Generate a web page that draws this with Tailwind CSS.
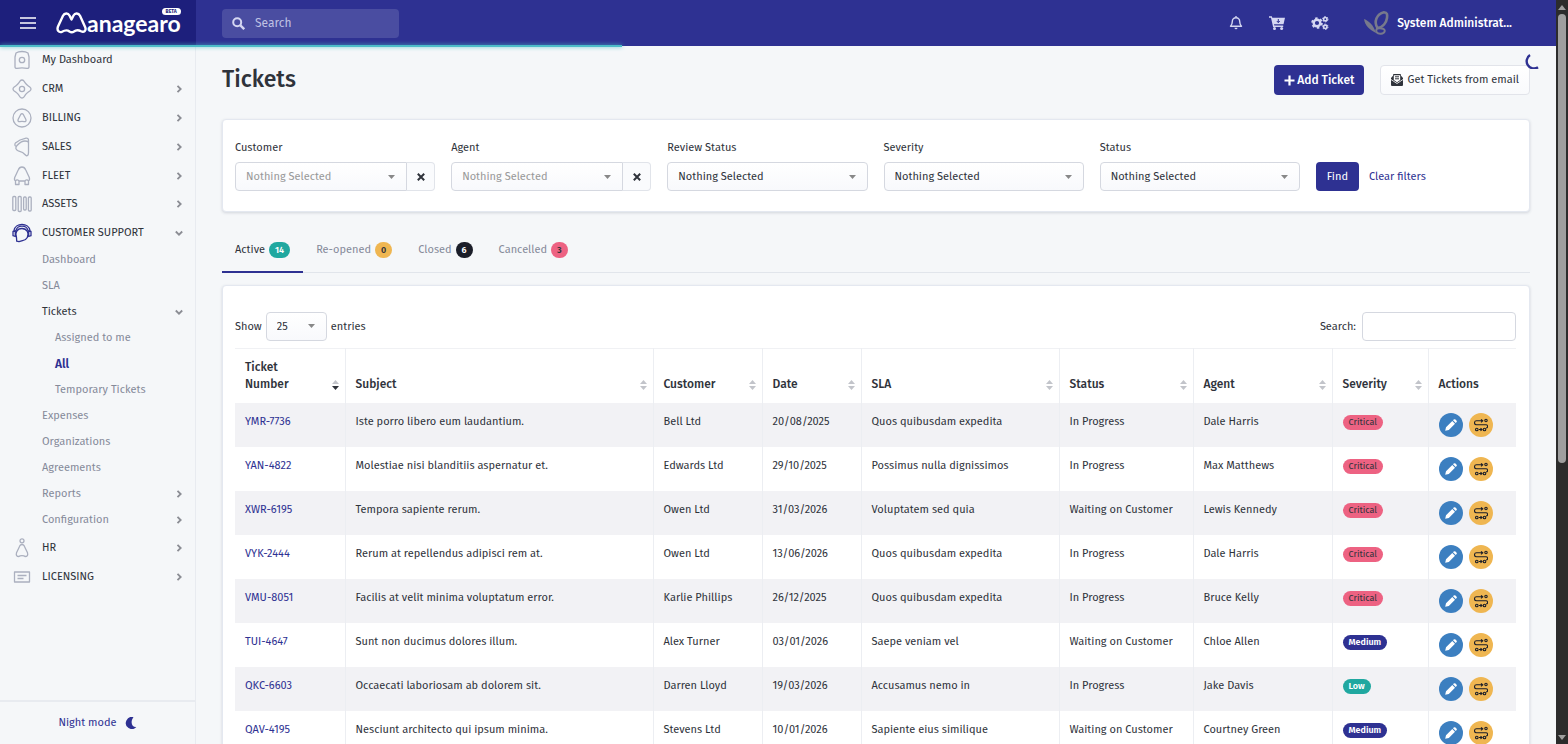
<!DOCTYPE html>
<html lang="en">
<head>
  <meta charset="utf-8" />
  <title>Tickets • Managearo</title>
  <script src="https://cdn.jsdelivr.net/npm/@tailwindcss/browser@4"></script>
</head>
<body class="h-screen flex overflow-hidden bg-[#f5f7f9] font-['Fira_Sans','Noto_Sans',sans-serif] text-[11px] leading-4 text-[#2f333b]">

  <div class="flex-1 min-w-0 flex flex-col">

    <!-- TOP BAR -->
    <header class="relative shrink-0 h-[46px] flex bg-[#2e3192] text-[#d5d7f2]">
      <div class="w-[196px] shrink-0 flex items-center pl-5 bg-[#1d1f7c] text-white">
        <button aria-label="Toggle menu">
          <svg class="w-4 h-3" viewBox="0 0 16 12" fill="none" stroke="currentColor" stroke-width="1.6"><path d="M0 1h16M0 6h16M0 11h16"/></svg>
        </button>
        <a href="#" class="relative ml-5 flex items-center">
          <svg class="w-[31px] h-[22px]" viewBox="0 0 31 22" fill="none" stroke="currentColor" stroke-width="2.400" stroke-linecap="round" stroke-linejoin="round"><path d="M15.500 7.500L13.500 3.500C12 .8 8.500.8 7 3.800L2 14.500C.5 18.500 3 21 6 19.800 9 18 11 17.500 13.500 19.500c1.500 1 3 1 4.500 0 2.500-2 4.500-1.700 7-.2 3 1.500 5.500-.8 4.200-4L24 3.800C22.500.8 19 .8 17.500 3.500z"/></svg>
          <span class="font-['Lato',sans-serif] text-[23px] leading-6 font-bold">anagearo</span>
          <span class="absolute right-0 -top-[3px] px-1 rounded-full bg-white text-[#1d1f7c] text-[5px] leading-[7px] font-bold">BETA</span>
        </a>
      </div>
      <div class="flex-1 flex items-center pl-[26px] pr-11">
        <label class="w-[177px] h-[29px] flex items-center gap-[10px] px-[10px] rounded-sm bg-[#4a4da1]">
          <svg class="w-[13px] h-[13px] shrink-0" viewBox="0 0 13 13" fill="none" stroke="currentColor" stroke-width="2"><circle cx="5.200" cy="5.200" r="4"/><path d="M8.200 8.200l4 4" stroke-width="2.400"/></svg>
          <input type="text" placeholder="Search" aria-label="Search" class="w-full min-w-0 bg-transparent outline-none text-xs placeholder:text-[#bfc1e3]" />
        </label>
        <div class="ml-auto flex items-center">
          <button aria-label="Notifications">
            <svg class="w-[14px] h-[14px]" viewBox="0 0 14 14" fill="none" stroke="currentColor" stroke-width="1.400" stroke-linejoin="round"><path d="M7 1.800C4.500 1.800 3.300 3.500 3.300 5.500c0 2.800-.8 3.500-1.800 4.700h11c-1-1.200-1.800-1.900-1.800-4.700 0-2-1.200-3.700-3.700-3.700zM7 0v2"/><path d="M5.500 11.800a1.500 1.500 0 003 0z" fill="currentColor" stroke="none"/></svg>
          </button>
          <button aria-label="Cart" class="ml-[26px]">
            <svg class="w-4 h-[14px]" viewBox="0 0 16 14" fill="currentColor"><path d="M0 .3h2.800l.5 1.500H16l-1.500 6.500H5l.3 1.200h8.900V11H4.100L2 1.800H0z"/><circle cx="5.500" cy="12.500" r="1.500"/><circle cx="12.600" cy="12.500" r="1.500"/><path d="M9.300 3v3.600M7.800 5l1.500 1.600L10.800 5" stroke="#2e3192" fill="none"/></svg>
          </button>
          <button aria-label="Settings" class="ml-[26px]">
            <svg class="w-[18px] h-[14px]" viewBox="0 0 18 14" fill="none" stroke="currentColor"><circle cx="6" cy="7" r="3.300" stroke-width="2.400"/><circle cx="6" cy="7" r="4.900" stroke-width="1.800" stroke-dasharray="2.500 2.630"/><circle cx="14.300" cy="3.200" r="1.700" stroke-width="1.600"/><circle cx="14.300" cy="3.200" r="2.700" stroke-width="1" stroke-dasharray="1.500 1.330"/><circle cx="14.300" cy="10.800" r="1.700" stroke-width="1.600"/><circle cx="14.300" cy="10.800" r="2.700" stroke-width="1" stroke-dasharray="1.500 1.330"/></svg>
          </button>
          <button class="ml-[34px] flex items-center gap-2 text-white text-xs font-medium">
            <svg class="w-[26px] h-[26px]" viewBox="0 0 26 26" fill="none" stroke="#77798c" stroke-width="2.600"><path d="M14.500 18C10.500 12 13.500 4 21 2.300c3.400 0 3.400 2.700 3 5.700-.6 4.500-4 9.500-9.500 10z"/><path d="M14 18.500c-2 3 0 5.500 4 5.200s5-4 2-5c-2-.6-4-.4-6-.2z" stroke-width="2"/><path d="M1 9c5 2 9.500 6 12 14C7 20 2 16 1 9z" fill="#77798c" stroke="none"/></svg>
            System Administrat...
          </button>
        </div>
      </div>
      <!-- page load progress -->
      <div class="absolute left-0 top-full w-2/5 h-[2px] -mt-px bg-[#4cbcc8] shadow-[0_0_4px_#4cbcc8]"></div>
    </header>

    <div class="flex-1 min-h-0 flex">

      <!-- SIDEBAR -->
      <aside class="w-[196px] shrink-0 flex flex-col border-r border-[#e8ebf0]">
        <nav id="nav" class="flex-1 min-h-0 overflow-hidden"></nav>
        <button class="h-11 shrink-0 flex items-center justify-center gap-2 border-t-2 border-[#e8ebf0] text-[#2e3192]">
          Night mode
          <svg class="w-3 h-3" viewBox="0 0 12 12" fill="currentColor"><path d="M8.500.2A6 6 0 1011.300 10C7 10.500 4.800 5 8.500.2z"/></svg>
        </button>
      </aside>

      <!-- CONTENT -->
      <main class="relative flex-1 min-w-0 overflow-hidden px-[26px] pt-[19px]">
        <svg class="absolute right-4 top-2 w-[15px] h-[15px]" viewBox="0 0 15 15" fill="none" stroke="#2e3192" stroke-width="2.400"><path d="M5 1A6.500 6.500 0 0013 13.300"/></svg>

        <div class="flex items-start justify-between">
          <h1 class="text-[23px] leading-7 font-medium">Tickets</h1>
          <div class="flex gap-4">
            <button class="h-[30px] px-[10px] flex items-center gap-[2px] rounded-sm bg-[#2e3192] text-white text-xs font-medium">
              <svg class="w-[11px] h-[11px]" viewBox="0 0 11 11" stroke="currentColor" stroke-width="2.200"><path d="M5.500.5v10M.5 5.500h10"/></svg>
              Add Ticket
            </button>
            <button class="h-[30px] px-[10px] flex items-center gap-1 rounded-sm border border-[#e2e4ea] bg-linear-to-b from-white to-[#f9fafc]">
              <svg class="w-3 h-3" viewBox="0 0 12 12"><path d="M0 4l2-2.200V1q0-1 1-1h6q1 0 1 1v.8L12 4v7q0 1-1 1H1q-1 0-1-1z" fill="#2f333b"/><path d="M2.800 1.200h6.400V6L6 8.200 2.800 6z" fill="#fff"/><path d="M0 5.500l6 4 6-4" stroke="#fff" stroke-width=".8" fill="none"/><path d="M4 2.800h4M4 4.800h4" stroke="#2f333b"/></svg>
              Get Tickets from email
            </button>
          </div>
        </div>

        <!-- filters -->
        <form class="mt-6 pl-3 pr-[13px] py-5 grid grid-cols-6 gap-4 rounded-sm border border-[#e4e8f0] bg-white shadow-[0_1px_3px_rgba(50,60,90,.18)]">
          <div id="filters" class="contents"></div>
          <div class="flex items-end gap-[10px]">
            <button type="button" class="h-[29px] px-[11px] rounded-sm bg-[#2e3192] text-white">Find</button>
            <a href="#" class="leading-[29px] text-[#2e3192]">Clear filters</a>
          </div>
        </form>

        <!-- tabs -->
        <div id="tabs" class="mt-4 flex border-b border-[#e1e5eb]" role="tablist"></div>

        <section class="mt-3 pl-3 pr-[13px] pt-[26px] rounded-sm border border-[#e4e8f0] bg-white shadow-[0_1px_3px_rgba(50,60,90,.18)]">
          <div class="flex justify-between">
            <label class="flex items-center gap-1">Show
              <span class="relative">
                <select class="appearance-none w-[61px] h-[29px] pl-[10px] rounded-sm border border-[#d5d8e0] bg-linear-to-b from-white to-[#f8f9fc]"><option>25</option><option>50</option><option>100</option></select>
                <svg class="absolute right-3 top-3 w-[7px] h-1 pointer-events-none" viewBox="0 0 7 4" fill="#888"><path d="M0 0h7L3.500 4z"/></svg>
              </span>
              entries</label>
            <label class="flex items-center gap-[6px]">Search:
              <input type="search" class="w-[154px] h-[29px] px-2 rounded-sm border border-[#d5d8e0] bg-white" />
            </label>
          </div>

          <table class="mt-[7px] w-full table-fixed border-collapse">
            <colgroup>
              <col class="w-[110px]" /><col /><col class="w-[109px]" /><col class="w-[99px]" /><col class="w-[198px]" />
              <col class="w-[134px]" /><col class="w-[139px]" /><col class="w-[96px]" /><col class="w-[88px]" />
            </colgroup>
            <thead class="border-t border-[#f0f1f4]"><tr id="head"></tr></thead>
            <tbody id="rows"></tbody>
          </table>
        </section>
      </main>
    </div>
  </div>

  <!-- scrollbar -->
  <div class="w-3 shrink-0 flex flex-col items-center bg-[#2c2c2c]">
    <svg class="w-2 h-[14px]" viewBox="0 0 8 14" fill="#9f9f9f"><path d="M0 10l4-5 4 5z"/></svg>
    <div class="w-2 h-[60.4%] rounded-full bg-[#9f9f9f]"></div>
    <svg class="w-2 h-[14px] mt-auto" viewBox="0 0 8 14" fill="#9f9f9f"><path d="M0 5l4 5 4-5z"/></svg>
  </div>

  <script>
    /* ---------- sidebar ---------- */
    const icons = {
      dash:    '<path d="M3 7l1-4c3-2 9-2 12 0l1 4v10c0 1-1 1.500-2 1.300-3-.6-7-.6-10 0-1 .2-2-.3-2-1.300z"/><circle cx="10" cy="10" r="2.700"/>',
      crm:     '<path d="M8 2.200c1.200-1.600 2.800-1.600 4 0l1 1.500c.8 1.300 2 2.400 3.300 3.300l1.500 1c1.600 1.200 1.600 2.800 0 4l-1.500 1c-1.300.9-2.500 2-3.300 3.300l-1 1.500c-1.200 1.600-2.800 1.600-4 0l-1-1.500C6.200 15 5 13.900 3.700 13l-1.500-1c-1.600-1.200-1.600-2.800 0-4l1.500-1C5 6.100 6.200 5 7 3.700z"/><circle cx="10" cy="10" r="2.600"/>',
      bill:    '<circle cx="10" cy="10" r="9"/><path d="M8.700 6.500q1.300-1.600 2.600 0l2.500 4.700q.9 2.600-1.600 2.500-2.200-.6-4.400 0-2.500.1-1.600-2.500z"/>',
      sales:   '<path d="M4 9c-1 .4-1.500-2-.6-2.900C6 3.800 10 2 14 1.200c1.500-.2 2.500.5 2.500 2v12.300c0 3-1.500 4-3 2.500-1.500-2-3-3.200-7.200-4.200-2.800-1-3.100-3.200-1.300-5.300 2-2.300 5-4.500 8-4.500 2 0 3.300.2 3.300 1.500"/>',
      fleet:   '<path d="M3.500 15c-1-.5-1.200-2-.8-3.500L6.200 4c1.500-4 6-4 7.600 0l3.500 7.500c.4 1.500.2 3-.8 3.500-.8-1.500-3-1.500-3.500 0H7c-.6-1.500-2.700-1.500-3.500 0zM3.500 15v3.500H7V15M13 15v3.500h3.500V15"/>',
      assets:  '<rect x=".8" y="2.500" width="3" height="14" rx="1"/><rect x="6.200" y="2.500" width="3" height="15" rx="1"/><rect x="11.600" y="3" width="2.600" height="13" rx="1"/><rect x="16.400" y="3" width="2.800" height="14" rx="1"/>',
      support: '<path d="M1.800 8C3.200-.8 16.800-.8 18.200 8M3.800 8.200C5 1.500 15 1.500 16.200 8.200M1 8.500v4.200l2.300.8V8zM19 8.500v4.200l-2.300.8V8z"/><path d="M4.500 14.500C2.500 10 5 5.500 10 5.500s7.500 5 5.300 9c-1.300 2.300-3 3-4.800 3.200L7 18.700l-2.300-.5z"/>',
      hr:      '<circle cx="10" cy="2.800" r="2"/><path d="M8 7.500q2-2 4 0l3.500 7.300q1 3.700-2.500 3.700l-1-.6q-2-.5-4 0l-1 .6q-3.500 0-2.500-3.700z"/>',
      license: '<path d="M2.500 5h15v10h-15zM5.500 8.500h9M5.500 11.500h6"/>',
    };

    const nav = [
      { t: 'My Dashboard', icon: 'dash', short: 1 },
      { t: 'CRM', icon: 'crm', arrow: 'right' },
      { t: 'BILLING', icon: 'bill', arrow: 'right' },
      { t: 'SALES', icon: 'sales', arrow: 'right' },
      { t: 'FLEET', icon: 'fleet', arrow: 'right' },
      { t: 'ASSETS', icon: 'assets', arrow: 'right', short: 1 },
      { t: 'CUSTOMER SUPPORT', icon: 'support', arrow: 'down', on: 1 },
      { t: 'Dashboard', level: 1 },
      { t: 'SLA', level: 1 },
      { t: 'Tickets', level: 1, arrow: 'down', on: 1 },
      { t: 'Assigned to me', level: 2 },
      { t: 'All', level: 2, current: 1 },
      { t: 'Temporary Tickets', level: 2 },
      { t: 'Expenses', level: 1 },
      { t: 'Organizations', level: 1 },
      { t: 'Agreements', level: 1 },
      { t: 'Reports', level: 1, arrow: 'right' },
      { t: 'Configuration', level: 1, arrow: 'right' },
      { t: 'HR', icon: 'hr', arrow: 'right' },
      { t: 'LICENSING', icon: 'license', arrow: 'right' },
    ];

    const arrow = dir => !dir ? '' : `
      <svg class="ml-auto w-2 h-2" viewBox="0 0 8 8" fill="none" stroke="#8b8d94" stroke-width="1.800">
        <path d="${dir === 'down' ? 'M.8 2.500L4 5.700l3.200-3.200' : 'M2.500.8l3.200 3.200-3.200 3.200'}"/>
      </svg>`;

    document.getElementById('nav').innerHTML = nav.map(n => {
      if (n.icon) return /*html*/`
        <a href="#" class="${n.short ? 'h-7' : 'h-[29px]'} pl-3 pr-3 flex items-center">
          <svg class="w-5 h-5 mr-[10px]" viewBox="0 0 20 20" fill="none" stroke="${n.on ? '#2e3192' : '#abb0bf'}" stroke-width="1.300" stroke-linejoin="round">${icons[n.icon]}</svg>
          ${n.t}${arrow(n.arrow)}
        </a>`;
      const pad   = n.level === 2 ? 'pl-[55px]' : 'pl-[42px]';
      const color = n.current ? 'text-[#2e3192] text-xs font-semibold' : n.on ? 'text-[#2f333b]' : 'text-[#858a99]';
      return `<a href="#" class="h-[26px] ${pad} pr-3 flex items-center ${color}">${n.t}${arrow(n.arrow)}</a>`;
    }).join('');

    /* ---------- filters ---------- */
    const caret = '<svg class="absolute right-3 top-[13px] w-[7px] h-1 pointer-events-none" viewBox="0 0 7 4" fill="#888"><path d="M0 0h7L3.500 4z"/></svg>';
    document.getElementById('filters').innerHTML = [
      ['Customer', true], ['Agent', true], ['Review Status'], ['Severity'], ['Status'],
    ].map(([label, clearable], i) => /*html*/`
      <div>
        <label for="f-${i}" class="block mb-[6px]">${label}</label>
        <div class="flex">
          <div class="relative flex-1">
            <select id="f-${i}" class="appearance-none w-full h-[29px] pl-[10px] border border-[#d5d8e0] bg-linear-to-b from-white to-[#f8f9fc] ${clearable ? 'rounded-l-sm text-[#999]' : 'rounded-sm'}"><option>Nothing Selected</option></select>
            ${caret}
          </div>
          ${clearable ? `<button type="button" aria-label="Clear ${label}" class="w-7 h-[29px] flex items-center justify-center rounded-r-sm border border-l-0 border-[#e1e4ea] bg-[#fafbfd]">
            <svg class="w-2 h-2" viewBox="0 0 8 8" stroke="currentColor" stroke-width="2"><path d="M.8.8l6.400 6.400M7.200.8L.8 7.200"/></svg></button>` : ''}
        </div>
      </div>`).join('');

    /* ---------- tabs ---------- */
    document.getElementById('tabs').innerHTML = [
      ['Active', 14, 'bg-[#20a8a0] text-white'],
      ['Re-opened', 0, 'bg-[#efb651] text-[#2f333b]'],
      ['Closed', 6, 'bg-[#1b1e29] text-white'],
      ['Cancelled', 3, 'bg-[#ed6282] text-[#2f333b]'],
    ].map(([name, n, color], i) => /*html*/`
      <button role="tab" class="h-[45px] px-[13px] -mb-px flex items-center gap-1 border-b-2 ${i ? 'border-transparent text-[#858a99]' : 'border-[#2e3192]'}">
        ${name}<span class="px-[6px] rounded-full text-[9px] leading-4 font-semibold ${color}">${n}</span>
      </button>`).join('');

    /* ---------- table ---------- */
    const heads = ['Ticket Number', 'Subject', 'Customer', 'Date', 'SLA', 'Status', 'Agent', 'Severity', 'Actions'];
    document.getElementById('head').innerHTML = heads.map((h, i) => /*html*/`
      <th class="h-[54px] px-[10px] pb-[10px] text-left align-bottom text-xs leading-[17px] font-medium ${i < 8 ? 'border-r border-[#eceef2]' : ''}">
        <div class="flex items-end justify-between">
          <span ${i ? '' : 'class="w-12"'}>${h}</span>
          ${i < 8 ? `<svg class="w-[7px] h-[17px] shrink-0 -mr-1" viewBox="0 0 7 17" fill="#c2c4ca"><path d="M0 8l3.500-4L7 8z"/><path d="M0 10h7l-3.500 4z" ${i ? '' : 'fill="#2f333b"'}/></svg>` : ''}
        </div>
      </th>`).join('');

    const severity = {
      Critical: 'bg-[#ed6282] text-[#2f333b]',
      Medium:   'bg-[#2e3192] text-white font-semibold',
      Low:      'bg-[#20a8a0] text-white font-semibold',
    };

    const tickets = [
      ['YMR-7736', 'Iste porro libero eum laudantium.', 'Bell Ltd', '20/08/2025', 'Quos quibusdam expedita', 'In Progress', 'Dale Harris', 'Critical'],
      ['YAN-4822', 'Molestiae nisi blanditiis aspernatur et.', 'Edwards Ltd', '29/10/2025', 'Possimus nulla dignissimos', 'In Progress', 'Max Matthews', 'Critical'],
      ['XWR-6195', 'Tempora sapiente rerum.', 'Owen Ltd', '31/03/2026', 'Voluptatem sed quia', 'Waiting on Customer', 'Lewis Kennedy', 'Critical'],
      ['VYK-2444', 'Rerum at repellendus adipisci rem at.', 'Owen Ltd', '13/06/2026', 'Quos quibusdam expedita', 'In Progress', 'Dale Harris', 'Critical'],
      ['VMU-8051', 'Facilis at velit minima voluptatum error.', 'Karlie Phillips', '26/12/2025', 'Quos quibusdam expedita', 'In Progress', 'Bruce Kelly', 'Critical'],
      ['TUI-4647', 'Sunt non ducimus dolores illum.', 'Alex Turner', '03/01/2026', 'Saepe veniam vel', 'Waiting on Customer', 'Chloe Allen', 'Medium'],
      ['QKC-6603', 'Occaecati laboriosam ab dolorem sit.', 'Darren Lloyd', '19/03/2026', 'Accusamus nemo in', 'In Progress', 'Jake Davis', 'Low'],
      ['QAV-4195', 'Nesciunt architecto qui ipsum minima.', 'Stevens Ltd', '10/01/2026', 'Sapiente eius similique', 'Waiting on Customer', 'Courtney Green', 'Medium'],
    ];

    const td = 'px-[10px] py-[10px] leading-[18px] border-r border-[#eceef2]';
    document.getElementById('rows').innerHTML = tickets.map(([id, ...cells]) => {
      const sev = cells.pop();
      return /*html*/`
      <tr class="h-11 align-top whitespace-nowrap odd:bg-[#f2f2f5]">
        <td class="${td}"><a href="#" class="text-[#2e3192]">${id}</a></td>
        ${cells.map(c => `<td class="${td}">${c}</td>`).join('')}
        <td class="${td}"><span class="inline-block px-[6px] rounded-full text-[9px] leading-[15px] ${severity[sev]}">${sev}</span></td>
        <td class="px-[10px] py-[10px]">
          <div class="flex gap-[6px]">
            <button aria-label="Edit ${id}" class="w-6 h-6 flex items-center justify-center rounded-full bg-[#3c7fc0] text-white">
              <svg class="w-3 h-3" viewBox="0 0 12 12" fill="currentColor"><path d="M7.300 2L10 4.700 3.800 11l-3.600.8L1 8.200zM8 1.300l.7-.7q.9-.9 1.800 0l.9.9q.9.900 0 1.800l-.7.700z"/></svg>
            </button>
            <button aria-label="Workflow ${id}" class="w-6 h-6 flex items-center justify-center rounded-full bg-[#efb651] text-[#1b1e29]">
              <svg class="w-[14px] h-[14px]" viewBox="0 0 14 14" fill="none" stroke="currentColor" stroke-width="1.100"><path d="M9 2.800H2.500a2 2 0 000 4h9.500a1.500 1.500 0 010 3.200M7 1.300L8.800 2.800 7 4.300M5 11.500h3M6.500 10.200L8 11.500 6.500 12.800"/><circle cx="12" cy="2.500" r="1.200"/><circle cx="2.800" cy="11.500" r="1.300"/><circle cx="10.500" cy="11.500" r="1.300"/></svg>
            </button>
          </div>
        </td>
      </tr>`;
    }).join('');
  </script>
</body>
</html>
